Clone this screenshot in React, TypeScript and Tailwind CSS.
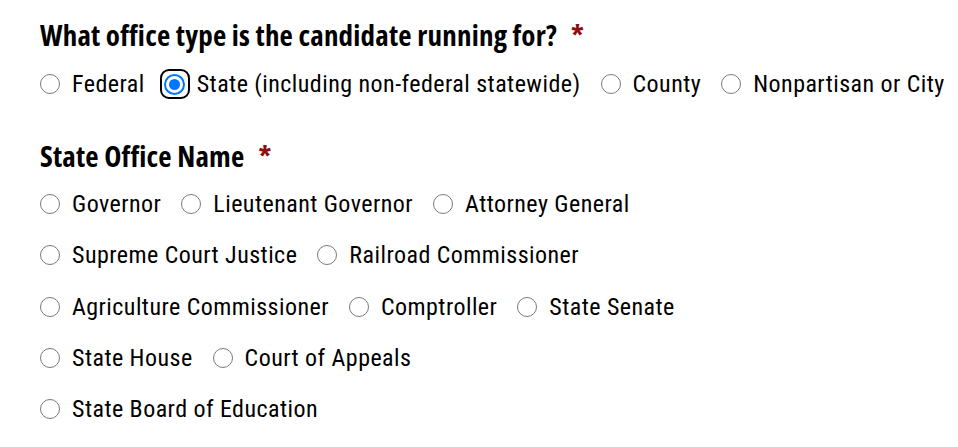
import { useState } from "react";

const officeTypes = [
  "Federal",
  "State (including non-federal statewide)",
  "County",
  "Nonpartisan or City",
];

const stateOfficeRows = [
  ["Governor", "Lieutenant Governor", "Attorney General"],
  ["Supreme Court Justice", "Railroad Commissioner"],
  ["Agriculture Commissioner", "Comptroller", "State Senate"],
  ["State House", "Court of Appeals"],
  ["State Board of Education"],
];

function Radio({
  label,
  checked,
  focused,
  onSelect,
}: {
  label: string;
  checked: boolean;
  focused?: boolean;
  onSelect: () => void;
}) {
  return (
    <label
      className="flex items-center gap-[12px] cursor-pointer"
      onClick={onSelect}
    >
      <span className="relative flex h-5 w-5 shrink-0 items-center justify-center">
        {focused && (
          <span className="absolute -inset-[5px] rounded-[9px] border-[2.5px] border-black" />
        )}
        {checked ? (
          <span className="flex h-[21px] w-[21px] shrink-0 items-center justify-center rounded-full border-2 border-[#0075ff] bg-white">
            <span className="h-[11px] w-[11px] rounded-full bg-[#0075ff]" />
          </span>
        ) : (
          <span className="h-5 w-5 rounded-full border-[1.5px] border-[#7a7a7a] bg-white" />
        )}
      </span>
      <span className="whitespace-nowrap">{label}</span>
    </label>
  );
}

function Heading({ children }: { children: string }) {
  return (
    <h2
      className="flex items-center gap-[14px] text-[29px] font-bold leading-[29px] tracking-[0.2px] text-black"
      style={{ fontFamily: '"Open Sans", sans-serif', fontStretch: "75%" }}
    >
      {children}
      <span className="text-[#8b1111]">*</span>
    </h2>
  );
}

export default function App() {
  const [officeType, setOfficeType] = useState(officeTypes[1]);
  const [stateOffice, setStateOffice] = useState("");

  return (
    <div
      className="min-h-screen bg-white px-10 pt-[20px] text-[24px] leading-[28px] tracking-[0.45px] text-black"
      style={{ fontFamily: "Roboto, sans-serif", fontStretch: "75%" }}
    >
      <Heading>What office type is the candidate running for?</Heading>
      <div className="mt-[21px] flex gap-[20px]">
        {officeTypes.map((t, i) => (
          <Radio
            key={t}
            label={t}
            checked={officeType === t}
            focused={i === 1}
            onSelect={() => setOfficeType(t)}
          />
        ))}
      </div>

      <div className="mt-[43px]">
        <Heading>State Office Name</Heading>
      </div>
      <div className="mt-[20px] flex flex-col gap-[23.25px]">
        {stateOfficeRows.map((row, r) => (
          <div key={r} className="flex gap-[20px]">
            {row.map((o) => (
              <Radio
                key={o}
                label={o}
                checked={stateOffice === o}
                onSelect={() => setStateOffice(o)}
              />
            ))}
          </div>
        ))}
      </div>
    </div>
  );
}
